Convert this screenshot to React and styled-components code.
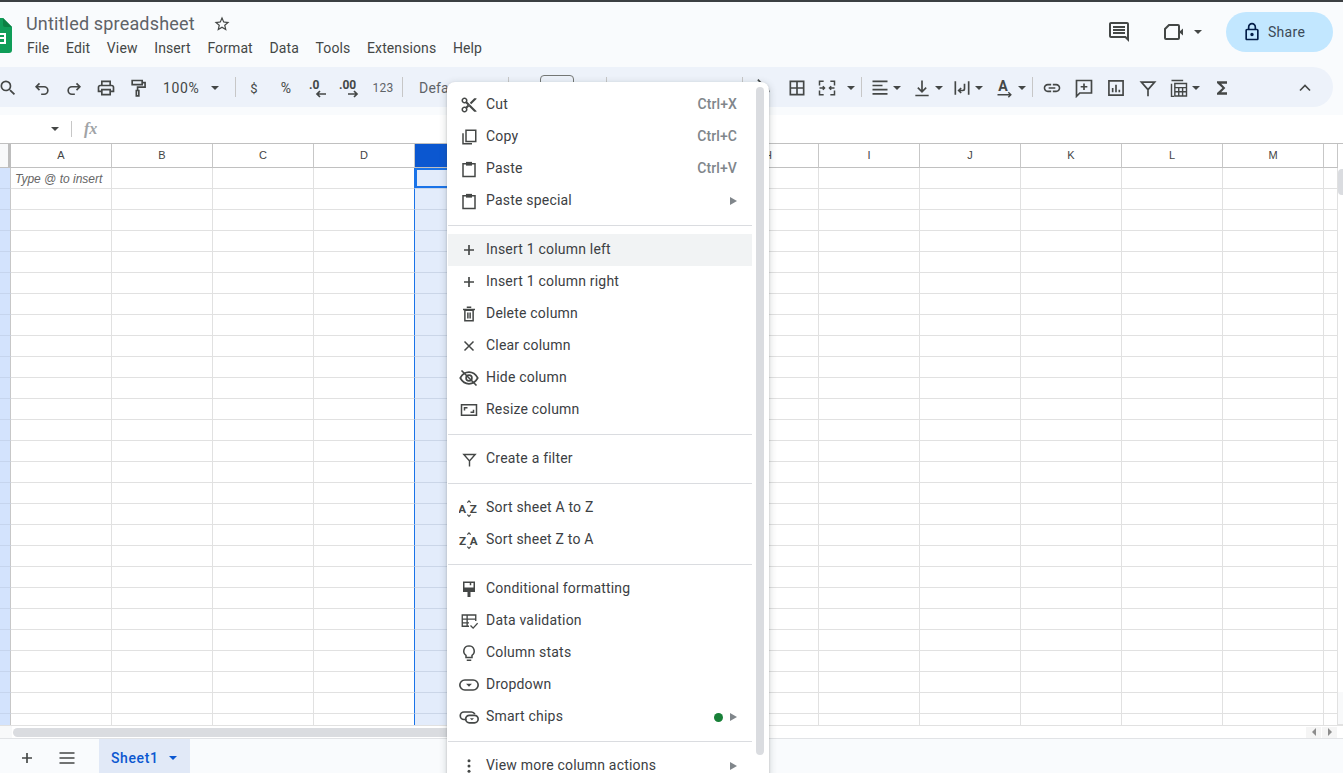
import React from "react";
import styled, { createGlobalStyle } from "styled-components";

const Global = createGlobalStyle`
  html, body { margin: 0; padding: 0; background: #f9fbfd; overflow: hidden; }
  * { box-sizing: border-box; }
  body { font-family: Roboto, "Liberation Sans", sans-serif; }
`;

const Page = styled.div`
  position: relative;
  display: flex;
  flex-direction: column;
  width: 1343px;
  height: 773px;
  overflow: hidden;
  background: #f9fbfd;
  border-top: 2px solid #3c4043;
`;

const Header = styled.header`
  display: flex;
  align-items: flex-start;
  height: 65px;
  flex: none;
  padding: 9px 10px 0 0;
`;

const LogoSvg = styled.svg`
  flex: none;
  width: 26px;
  height: 35px;
  margin: 7px 0 0 -14px;
`;

const TitleBlock = styled.div`
  display: flex;
  flex-direction: column;
  margin-left: 14px;
`;

const TitleRow = styled.div`
  display: flex;
  align-items: center;
  height: 24px;
`;

const Title = styled.span`
  margin-top: 2px;
  font-size: 18px;
  line-height: 24px;
  color: #5f6368;
  letter-spacing: 0.17px;
`;

const StarIcon = styled.svg`
  width: 18px;
  height: 18px;
  margin: 1px 0 0 18px;
  fill: #444746;
`;

const MenuBar = styled.nav`
  display: flex;
  margin: 1px 0 0 1px;
  gap: 16.7px;
  font-size: 14px;
  line-height: 24px;
  color: #444746;
  letter-spacing: 0.1px;
`;

const HeaderActions = styled.div`
  display: flex;
  align-items: center;
  margin: 1px 0 0 auto;
  height: 40px;
  color: #444746;
`;

const ActionIcon = styled.svg`
  width: ${(p) => p.$size || 24}px;
  height: ${(p) => p.$size || 24}px;
  fill: ${(p) => p.$fill || "#444746"};
  flex: none;
`;

const VideoGroup = styled.div`
  display: flex;
  align-items: center;
  gap: 8px;
  margin: 0 24px 0 31px;
`;

const ShareButton = styled.div`
  display: flex;
  align-items: center;
  width: 107px;
  height: 40px;
  padding-left: 16px;
  gap: 6px;
  border-radius: 20px;
  background: #c2e7ff;
  color: #3c4a57;
  font-size: 14px;
  letter-spacing: 0.3px;
`;

const Toolbar = styled.div`
  display: flex;
  align-items: center;
  flex: none;
  height: 40px;
  width: 1341px;
  margin-left: -8px;
  padding-top: 2px;
  border-radius: 0 20px 20px 0;
  background: #edf2fa;
`;

const Tool = styled.div`
  display: flex;
  flex: none;
  align-items: center;
  justify-content: ${(p) => (p.$start ? "flex-start" : "center")};
  gap: ${(p) => p.$gap ?? 3}px;
  width: ${(p) => p.$w}px;
  height: 24px;
  padding-left: ${(p) => p.$pl || 0}px;
  margin-left: ${(p) => (p.$auto ? "auto" : "0")};
  margin-right: ${(p) => p.$mr || 0}px;
  color: #444746;
  font-size: 14px;
`;

const ToolText = styled.span`
  color: ${(p) => p.$color || "#444746"};
  font-size: ${(p) => p.$size || 14}px;
  letter-spacing: ${(p) => p.$ls ?? 0.2}px;
`;

const Sep = styled.div`
  flex: none;
  width: 1px;
  height: 20px;
  margin-top: -2px;
  background: #c7c7c7;
`;

const FontBox = styled.div`
  flex: none;
  width: 34px;
  height: 24px;
  margin-top: -2px;
  border: 1px solid #747775;
  border-radius: 4px;
`;

const Caret = styled.i`
  display: block;
  flex: none;
  width: 0;
  height: 0;
  border-left: 4px solid transparent;
  border-right: 4px solid transparent;
  border-top: 4px solid ${(p) => p.$color || "#444746"};
`;

const Svg = styled.svg.attrs({ viewBox: "0 0 24 24" })`
  display: block;
  flex: none;
  width: ${(p) => p.$size || 20}px;
  height: ${(p) => p.$size || 20}px;
  fill: none;
  stroke: currentColor;
  stroke-width: ${(p) => p.$sw || 2};
  color: #444746;
  .f { fill: currentColor; stroke: none; }
  text {
    fill: currentColor;
    stroke: none;
    font-family: Roboto, sans-serif;
    font-weight: 700;
  }
`;

const FormulaBar = styled.div`
  display: flex;
  align-items: center;
  flex: none;
  height: 28px;
  margin-top: 8px;
  background: #fff;
  padding-left: 51px;
`;

const FxSep = styled.div`
  width: 1px;
  height: 16px;
  background: #c7c7c7;
  margin-left: 12px;
`;

const Fx = styled.span`
  margin-left: 12px;
  font-family: "Liberation Serif", serif;
  font-style: italic;
  font-size: 16px;
  color: #a0a3a6;
  font-weight: 700;
`;

const GridArea = styled.div`
  display: flex;
  flex: none;
  height: 583px;
  background: #fff;
  border-top: 1px solid #c0c0c0;
  border-bottom: 1px solid #e1e1e1;
  overflow: hidden;
`;

const Sheet = styled.div`
  display: grid;
  flex: none;
  grid-template-columns: 11px repeat(13, 101px) 14px;
  grid-template-rows: 24px;
  grid-auto-rows: 21px;
  width: 1338px;
  align-content: start;
`;

const Corner = styled.div`
  background: #f8f9fa;
  border-right: 3px solid #bdbdbd;
  border-bottom: 1px solid #c0c0c0;
`;

const ColHead = styled.div`
  display: flex;
  align-items: center;
  justify-content: center;
  padding-bottom: 2px;
  font-family: "Liberation Sans", Arial, sans-serif;
  font-size: 11px;
  color: ${(p) => (p.$selected ? "#fff" : "#444")};
  background: ${(p) => (p.$selected ? "#0b57d0" : "#fff")};
  border-right: 1px solid #c7c7c7;
  border-bottom: 1px solid #c0c0c0;
`;

const RowHead = styled.div`
  background: #d3e3fd;
  border-right: 1px solid #c7c7c7;
  border-bottom: 1px solid #c6d5ee;
`;

const Cell = styled.div`
  display: flex;
  align-items: center;
  padding: 2px 0 0 4px;
  font-family: "Liberation Sans", Arial, sans-serif;
  font-size: 12px;
  font-style: italic;
  color: #666;
  white-space: nowrap;
  overflow: hidden;
  background: ${(p) => (p.$selected ? "#e3ecfb" : "#fff")};
  border-bottom: 1px solid ${(p) => (p.$selected ? "#cbd6e8" : "#e1e1e1")};
  border-right: 1px solid ${(p) => (p.$beforeSel ? "#1a73e8" : "#e1e1e1")};
  box-shadow: ${(p) => (p.$active ? "inset 0 0 0 2px #1a73e8" : "none")};
`;

const VScroll = styled.div`
  display: flex;
  flex-direction: column;
  flex: none;
  width: 5px;
  padding-top: 25px;
  background: #fff;
`;

const VThumb = styled.div`
  width: 5px;
  height: 26px;
  background: #dadce0;
  border-radius: 4px 0 0 4px;
`;

const VArrows = styled.div`
  margin-top: auto;
  height: 33px;
  background: #f8f9fa;
  border-bottom: 1px solid #e1e1e1;
`;

const HScroll = styled.div`
  display: flex;
  align-items: center;
  flex: none;
  height: 12px;
  background: #fff;
`;

const HCorner = styled.div`
  width: 12px;
  height: 12px;
  background: #f8f9fa;
  margin-right: 1px;
`;

const HThumb = styled.div`
  width: 740px;
  height: 9px;
  border-radius: 5px;
  background: #dadce0;
`;

const HArrows = styled.div`
  display: flex;
  gap: 1px;
  margin-left: auto;
  margin-right: 6px;
`;

const HArrow = styled.div`
  display: flex;
  align-items: center;
  justify-content: center;
  width: 15px;
  height: 11px;
  background: #f5f5f5;
  &::after {
    content: "";
    border-top: 4px solid transparent;
    border-bottom: 4px solid transparent;
    ${(p) => (p.$left ? "border-right: 4px solid #8d8d8d;" : "border-left: 4px solid #8d8d8d;")}
  }
`;

const TabBar = styled.footer`
  display: flex;
  align-items: center;
  flex: 1;
  border-top: 1px solid #e1e3e6;
  background: #f9fbfd;
  padding-left: 17px;
`;

const TabBtn = styled.div`
  display: flex;
  align-items: center;
  justify-content: center;
  width: 20px;
  margin-top: 3px;
  margin-right: ${(p) => p.$mr}px;
`;

const SheetTab = styled.div`
  display: flex;
  align-items: center;
  width: 91px;
  height: 34px;
  padding: 3px 0 0 12px;
  gap: 11px;
  background: #e1e9f7;
  color: #0b57d0;
  font-size: 14px;
  font-weight: 500;
  letter-spacing: 0.6px;
`;

const Menu = styled.div`
  position: absolute;
  left: 447px;
  top: 80px;
  width: 322px;
  height: 720px;
  padding: 7px 0 0 1px;
  background: #fff;
  border-radius: 8px;
  box-shadow: 0 2px 6px 2px rgba(60, 64, 67, 0.15), 0 1px 2px rgba(60, 64, 67, 0.3);
`;

const MenuThumb = styled.div`
  position: absolute;
  left: 309px;
  top: 5px;
  width: 8px;
  height: 668px;
  border-radius: 4px;
  background: #dadce0;
`;

const MenuRow = styled.div`
  display: flex;
  align-items: center;
  width: 304px;
  height: 32px;
  padding: 0 15px 0 11px;
  background: ${(p) => (p.$hover ? "#f1f3f4" : "transparent")};
`;

const MenuIcon = styled.span`
  display: flex;
  align-items: center;
  justify-content: center;
  width: 20px;
  flex: none;
  margin-right: 7px;
`;

const MenuLabel = styled.span`
  margin-bottom: 2px;
  font-size: 14px;
  letter-spacing: 0.2px;
  color: #3c4043;
`;

const Shortcut = styled.span`
  margin: 0 0 2px auto;
  font-size: 14px;
  font-weight: 500;
  letter-spacing: 0.1px;
  color: #80868b;
`;

const SubArrow = styled.i`
  display: block;
  margin-left: ${(p) => (p.$dot ? "7px" : "auto")};
  border-top: 4px solid transparent;
  border-bottom: 4px solid transparent;
  border-left: 7px solid #80868b;
`;

const GreenDot = styled.i`
  display: block;
  margin-left: auto;
  width: 9px;
  height: 9px;
  border-radius: 50%;
  background: #188038;
`;

const MenuDivider = styled.div`
  width: 304px;
  height: 1px;
  margin: 8px 0;
  background: #dadce0;
`;

const P = {
  star: "M22 9.24l-7.19-.62L12 2 9.19 8.63 2 9.24l5.46 4.73L5.82 21 12 17.27 18.18 21l-1.63-7.03L22 9.24zM12 15.4l-3.76 2.27 1-4.28-3.32-2.88 4.38-.38L12 6.1l1.71 4.04 4.38.38-3.32 2.88 1 4.28L12 15.4z",
  comment: "M21.99 4c0-1.1-.89-2-1.99-2H4c-1.1 0-2 .9-2 2v12c0 1.1.9 2 2 2h14l4 4-.01-18zM20 4v13.17L18.83 16H4V4h16zM6 12h12v2H6zm0-3h12v2H6zm0-3h12v2H6z",
  lock: "M18 8h-1V6c0-2.76-2.24-5-5-5S7 3.24 7 6v2H6c-1.1 0-2 .9-2 2v10c0 1.1.9 2 2 2h12c1.1 0 2-.9 2-2V10c0-1.1-.9-2-2-2zM9 6c0-1.66 1.34-3 3-3s3 1.34 3 3v2H9V6zm9 14H6V10h12v10zm-6-3c1.1 0 2-.9 2-2s-.9-2-2-2-2 .9-2 2 .9 2 2 2z",
  search: "M15.5 14h-.79l-.28-.27A6.471 6.471 0 0 0 16 9.5 6.5 6.5 0 1 0 9.5 16c1.61 0 3.09-.59 4.23-1.57l.27.28v.79l5 4.99L20.49 19l-4.99-5zm-6 0C7.01 14 5 11.99 5 9.5S7.01 5 9.5 5 14 7.01 14 9.5 11.99 14 9.5 14z",
  print: "M19 8h-1V3H6v5H5c-1.66 0-3 1.34-3 3v6h4v4h12v-4h4v-6c0-1.66-1.34-3-3-3zM8 5h8v3H8V5zm8 12v2H8v-4h8v2zm2-2v-2H6v2H4v-4c0-.55.45-1 1-1h14c.55 0 1 .45 1 1v4h-2z",
  link: "M3.9 12c0-1.71 1.39-3.1 3.1-3.1h4V7H7c-2.76 0-5 2.24-5 5s2.24 5 5 5h4v-1.9H7c-1.71 0-3.1-1.39-3.1-3.1zM8 13h8v-2H8v2zm9-6h-4v1.9h4c1.71 0 3.1 1.39 3.1 3.1s-1.39 3.1-3.1 3.1h-4V17h4c2.76 0 5-2.24 5-5s-2.24-5-5-5z",
  sigma: "M18 4H6v2l6.5 6L6 18v2h12v-3h-7l5-5-5-5h7z",
  cut: "M9.64 7.64c.23-.5.36-1.05.36-1.64 0-2.21-1.79-4-4-4S2 3.79 2 6s1.79 4 4 4c.59 0 1.14-.13 1.64-.36L10 12l-2.36 2.36C7.14 14.13 6.59 14 6 14c-2.21 0-4 1.79-4 4s1.79 4 4 4 4-1.79 4-4c0-.59-.13-1.14-.36-1.64L12 14l7 7h3v-1L9.64 7.64zM6 8c-1.1 0-2-.89-2-2s.9-2 2-2 2 .89 2 2-.9 2-2 2zm0 12c-1.1 0-2-.89-2-2s.9-2 2-2 2 .89 2 2-.9 2-2 2zm6-7.5c-.28 0-.5-.22-.5-.5s.22-.5.5-.5.5.22.5.5-.22.5-.5.5zM19 3l-6 6 2 2 7-7V3h-3z",
};

const I = {
  search: <path className="f" d={P.search} />,
  undo: <path d="M9 14.500L5 10.500l4-4M5 10.500h9.500a4.500 4.500 0 0 1 0 9H11" />,
  redo: <path d="M15 14.500l4-4-4-4M19 10.500H9.500a4.500 4.500 0 0 0 0 9H13" />,
  print: <path className="f" d={P.print} />,
  paint: <path d="M5 3h12v5H5zM17 5.500h3.500v5.500H11.500v4M10 15h3v6.500h-3z" />,
  bucket: (
    <>
      <path d="M7 2l9 9-6 6-6-6 7-6" />
      <path className="f" d="M19 12c1.500 2 2 3 2 4a2 2 0 0 1-4 0c0-1 .5-2 2-4z" />
    </>
  ),
  borders: <path d="M4 4h16v16H4zM12 4v16M4 12h16" />,
  merge: (
    <path d="M8 4H3v5M16 4h5v5M8 20H3v-5M16 20h5v-5M3 12h6M7 10l2 2-2 2M21 12h-6M17 10l-2 2 2 2" strokeWidth="1.800" />
  ),
  align: <path d="M3 4h18M3 9h12M3 14h18M3 19h18" />,
  valign: <path d="M12 3v13M7 11.500l5 5 5-5M4 21h16" />,
  wrap: <path d="M4 4v16M20 4v16M15 7v6a2 2 0 0 1-2 2H8M11 12l-3 3 3 3" />,
  textColor: (
    <>
      <text x="4" y="15" fontSize="17">A</text>
      <path d="M3 20h15M16 17l3 3-3 3" strokeWidth="1.700" />
    </>
  ),
  link: <path className="f" d={P.link} />,
  addComment: <path d="M3 3h18v15H7l-4 4zM12 6.500v8M8 10.500h8" />,
  chart: <path d="M3.500 3.500h17v17h-17zM8 12v5M12 8v9M16 14v3" />,
  filter: <path d="M4 5h16l-8 9zM12 14v8" />,
  funcs: <path d="M7 6.500h14v15H7zM7 11.500h14M7 16.500h14M11.700 11.500v10M16.300 11.500v10M3 7v15h3M3 3h14" strokeWidth="1.700" />,
  sigma: <path className="f" d={P.sigma} />,
  up: <path d="M6 15l6-6 6 6" />,
  plus: <path d="M12 6v12M6 12h12" />,
  hamb: <path d="M3 6h18M3 12h18M3 18h18" />,
  cut: <path className="f" d={P.cut} />,
  copy: <path d="M8 3h13v15H8zM4 7v14h12" />,
  paste: (
    <>
      <path d="M8 5H4v17h16V5h-4" />
      <path className="f" d="M8 2.500h8v5H8z" />
    </>
  ),
  trash: <path d="M6.500 7h11v14h-11zM4 6h16M9 3h6M10.500 10v8M13.500 10v8" />,
  close: <path d="M6 6l12 12M18 6L6 18" />,
  eyeOff: (
    <>
      <path d="M1.500 12C4 7.500 7.500 5 12 5s8 2.500 10.500 7c-2.500 4.500-6 7-10.500 7S4 16.500 1.500 12z" />
      <circle cx="12" cy="12" r="3.500" />
      <path d="M3 3l18 18" />
    </>
  ),
  resize: <path d="M2 5h20v14H2zM6 12.500V9h4M18 11.500V15h-4" />,
  az: (
    <>
      <text x="-1" y="18" fontSize="14">A</text>
      <text x="13" y="18" fontSize="14">Z</text>
      <path d="M10 5.500l2-2 2 2M10 20l2 2 2-2" strokeWidth="1.500" />
    </>
  ),
  za: (
    <>
      <text x="0" y="18" fontSize="14">Z</text>
      <text x="13" y="18" fontSize="14">A</text>
      <path d="M10 5.500l2-2 2 2M10 20l2 2 2-2" strokeWidth="1.500" />
    </>
  ),
  cond: (
    <>
      <path d="M5 3h14v12H5z" />
      <path className="f" d="M4 10h16v6H4zM10 15h4v7.500h-4zM13 3h2v4h-2z" />
    </>
  ),
  valid: <path d="M12 19H3V4h18v8M3 9.500h18M3 14.500h9M9.500 4v15M14 18l3.500 3.500L23.500 15" strokeWidth="1.800" />,
  bulb: <path d="M12 2.500a7 7 0 0 0-4 12.700V18h8v-2.800a7 7 0 0 0-4-12.700zM9 21.500h6" />,
  dropdown: (
    <>
      <rect x="1" y="6" width="22" height="12" rx="6" />
      <path className="f" d="M8.500 10.500h7L12 14z" />
    </>
  ),
  chips: (
    <>
      <path d="M9 15H6a4.500 4.500 0 0 1 0-9h9a4.500 4.500 0 0 1 4 2.500" />
      <rect x="8" y="10" width="15" height="9" rx="4.500" />
      <path className="f" d="M13 13.500h5L15.500 16z" />
    </>
  ),
  dots: (
    <>
      <circle className="f" cx="12" cy="5" r="2" />
      <circle className="f" cx="12" cy="12" r="2" />
      <circle className="f" cx="12" cy="19" r="2" />
    </>
  ),
};

const DecimalIcon = ({ label, right }) => (
  <Svg $size={24}>
    <text x={right ? 1 : 3} y="12.500" fontSize="12">{label}</text>
    <path
      d={right ? "M10 18h9M16 15l3 3-3 3" : "M20 18h-9M14 15l-3 3 3 3"}
      strokeWidth="1.700"
    />
  </Svg>
);

const Icon = ({ name, size }) => <Svg $size={size}>{I[name]}</Svg>;

const menuGroups = [
  [
    { i: "cut", t: "Cut", s: "Ctrl+X", z: 18 },
    { i: "copy", t: "Copy", s: "Ctrl+C", z: 18 },
    { i: "paste", t: "Paste", s: "Ctrl+V", z: 18 },
    { i: "paste", t: "Paste special", sub: true, z: 18 },
  ],
  [
    { i: "plus", t: "Insert 1 column left", hover: true },
    { i: "plus", t: "Insert 1 column right" },
    { i: "trash", t: "Delete column", z: 18 },
    { i: "close", t: "Clear column", z: 18 },
    { i: "eyeOff", t: "Hide column" },
    { i: "resize", t: "Resize column", z: 18 },
  ],
  [{ i: "filter", t: "Create a filter", z: 17 }],
  [
    { i: "az", t: "Sort sheet A to Z" },
    { i: "za", t: "Sort sheet Z to A" },
  ],
  [
    { i: "cond", t: "Conditional formatting", z: 18 },
    { i: "valid", t: "Data validation", z: 18 },
    { i: "bulb", t: "Column stats", z: 18 },
    { i: "dropdown", t: "Dropdown" },
    { i: "chips", t: "Smart chips", sub: true, dot: true },
  ],
  [{ i: "dots", t: "View more column actions", sub: true, z: 18 }],
];

const columns = "ABCDEFGHIJKLM".split("");
const menus = ["File", "Edit", "View", "Insert", "Format", "Data", "Tools", "Extensions", "Help"];
const rowCount = 27;

function Logo() {
  return (
    <LogoSvg viewBox="0 0 26 35">
      <path d="M2 0h15l9 9v23a3 3 0 0 1-3 3H3a3 3 0 0 1-3-3V2a2 2 0 0 1 2-2z" fill="#0f9d58" />
      <path d="M17 0l9 9h-7a2 2 0 0 1-2-2z" fill="#0b8043" />
      <path d="M6 15h14v11H6zM8 17v2h4v-2zM14 17v2h4v-2zM8 21v3h4v-3zM14 21v3h4v-3z" fill="#fff" fillRule="evenodd" />
    </LogoSvg>
  );
}

function SheetGrid() {
  const rows = [];
  for (let r = 0; r < rowCount; r++) {
    rows.push(<RowHead key={`h${r}`} />);
    columns.forEach((c) => {
      rows.push(
        <Cell
          key={c + r}
          $selected={c === "E"}
          $beforeSel={c === "D"}
          $active={c === "E" && r === 0}
        >
          {c === "A" && r === 0 ? "Type @ to insert" : null}
        </Cell>
      );
    });
    rows.push(<Cell key={`x${r}`} />);
  }
  return (
    <Sheet>
      <Corner />
      {columns.map((c) => (
        <ColHead key={c} $selected={c === "E"}>{c}</ColHead>
      ))}
      <ColHead />
      {rows}
    </Sheet>
  );
}

function ContextMenu() {
  return (
    <Menu>
      <MenuThumb />
      {menuGroups.map((group, g) => (
        <React.Fragment key={g}>
          {g > 0 && <MenuDivider />}
          {group.map((item) => (
            <MenuRow key={item.t} $hover={item.hover}>
              <MenuIcon>
                <Icon name={item.i} size={item.z} />
              </MenuIcon>
              <MenuLabel>{item.t}</MenuLabel>
              {item.s && <Shortcut>{item.s}</Shortcut>}
              {item.dot && <GreenDot />}
              {item.sub && <SubArrow $dot={item.dot} />}
            </MenuRow>
          ))}
        </React.Fragment>
      ))}
    </Menu>
  );
}

export default function App() {
  return (
    <>
      <Global />
      <Page>
        <Header>
          <Logo />
          <TitleBlock>
            <TitleRow>
              <Title>Untitled spreadsheet</Title>
              <StarIcon viewBox="0 0 24 24"><path d={P.star} /></StarIcon>
            </TitleRow>
            <MenuBar>
              {menus.map((m) => (
                <span key={m}>{m}</span>
              ))}
            </MenuBar>
          </TitleBlock>
          <HeaderActions>
            <ActionIcon viewBox="0 0 24 24"><path d={P.comment} /></ActionIcon>
            <VideoGroup>
              <Svg $size={24}>
                <path d="M7 5h9a1 1 0 0 1 1 1v12a1 1 0 0 1-1 1H4a1 1 0 0 1-1-1V9z" />
                <path className="f" d="M17 12l4-3.500v7z" />
              </Svg>
              <Caret />
            </VideoGroup>
            <ShareButton>
              <ActionIcon $size={20} $fill="#041e49" viewBox="0 0 24 24"><path d={P.lock} /></ActionIcon>
              Share
            </ShareButton>
          </HeaderActions>
        </Header>

        <Toolbar>
          <Tool $w={32}><Icon name="search" /></Tool>
          <Tool $w={36}><Icon name="undo" /></Tool>
          <Tool $w={28}><Icon name="redo" /></Tool>
          <Tool $w={36}><Icon name="print" /></Tool>
          <Tool $w={28}><Icon name="paint" /></Tool>
          <Tool $w={83} $start $pl={11} $gap={12}>
            <ToolText $ls={0.6}>100%</ToolText>
            <Caret />
          </Tool>
          <Sep />
          <Tool $w={36}><ToolText $size={13}>$</ToolText></Tool>
          <Tool $w={28}><ToolText>%</ToolText></Tool>
          <Tool $w={36}><DecimalIcon label=".0" /></Tool>
          <Tool $w={28}><DecimalIcon label=".00" right /></Tool>
          <Tool $w={38}><ToolText $size={12} $color="#5f6368">123</ToolText></Tool>
          <Sep />
          <Tool $w={105} $start $pl={16}><ToolText $color="#5f6368">Default</ToolText></Tool>
          <Sep />
          <Tool $w={31} />
          <FontBox />
          <Tool $w={32} />
          <Sep />
          <Tool $w={135} />
          <Sep />
          <Tool $w={38}><Icon name="bucket" /></Tool>
          <Tool $w={32}><Icon name="borders" /></Tool>
          <Tool $w={28}><Icon name="merge" /></Tool>
          <Tool $w={20}><Caret /></Tool>
          <Sep />
          <Tool $w={46}><Icon name="align" /><Caret /></Tool>
          <Tool $w={38}><Icon name="valign" /><Caret /></Tool>
          <Tool $w={42}><Icon name="wrap" /><Caret /></Tool>
          <Tool $w={44}><Icon name="textColor" /><Caret /></Tool>
          <Sep />
          <Tool $w={38}><Icon name="link" /></Tool>
          <Tool $w={26}><Icon name="addComment" /></Tool>
          <Tool $w={38}><Icon name="chart" /></Tool>
          <Tool $w={26}><Icon name="filter" /></Tool>
          <Tool $w={46}><Icon name="funcs" /><Caret /></Tool>
          <Tool $w={30}><Icon name="sigma" /></Tool>
          <Tool $w={32} $auto $mr={12}><Icon name="up" /></Tool>
        </Toolbar>

        <FormulaBar>
          <Caret />
          <FxSep />
          <Fx>fx</Fx>
        </FormulaBar>

        <GridArea>
          <SheetGrid />
          <VScroll>
            <VThumb />
            <VArrows />
          </VScroll>
        </GridArea>

        <HScroll>
          <HCorner />
          <HThumb />
          <HArrows>
            <HArrow $left />
            <HArrow />
          </HArrows>
        </HScroll>

        <TabBar>
          <TabBtn $mr={20}><Icon name="plus" size={20} /></TabBtn>
          <TabBtn $mr={22}><Icon name="hamb" size={20} /></TabBtn>
          <SheetTab>
            Sheet1
            <Caret $color="#0b57d0" />
          </SheetTab>
        </TabBar>

        <ContextMenu />
      </Page>
    </>
  );
}
